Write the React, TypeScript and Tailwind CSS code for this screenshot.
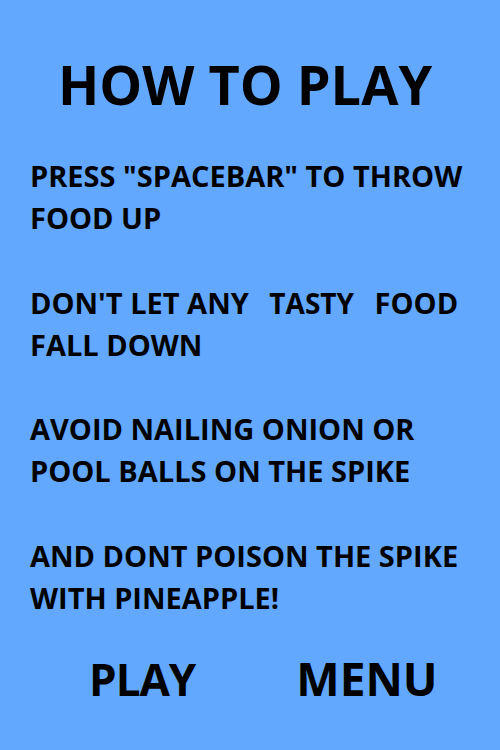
export default function App() {
  return (
    <div className="w-[500px] h-[750px] bg-[#62a8ff] text-black font-['Open_Sans',sans-serif] flex flex-col">
      <h1 className="text-center text-[54px] font-bold leading-none pt-[57px] pr-[10px]">HOW TO PLAY</h1>
      <div className="px-[30px] pt-[44px] text-[29px] font-bold leading-[42px]">
        <p>PRESS "SPACEBAR" TO THROW FOOD UP</p>
        <p className="mt-[43px]">
          <span>DON'T LET ANY</span> <span className="mx-[13px] text-[28px]">TASTY</span> <span>FOOD</span>{' '}
          <span>FALL DOWN</span>
        </p>
        <p className="mt-[42px]">AVOID NAILING ONION OR POOL BALLS ON THE SPIKE</p>
        <p className="mt-[43px]">AND DONT POISON THE SPIKE WITH PINEAPPLE!</p>
      </div>
      <div className="flex items-end mt-auto mb-[49px] font-bold leading-none">
        <button className="ml-[89px] text-[44px] tracking-[-1px]">PLAY</button>
        <button className="ml-[101px] text-[46px]">MENU</button>
      </div>
    </div>
  );
}
